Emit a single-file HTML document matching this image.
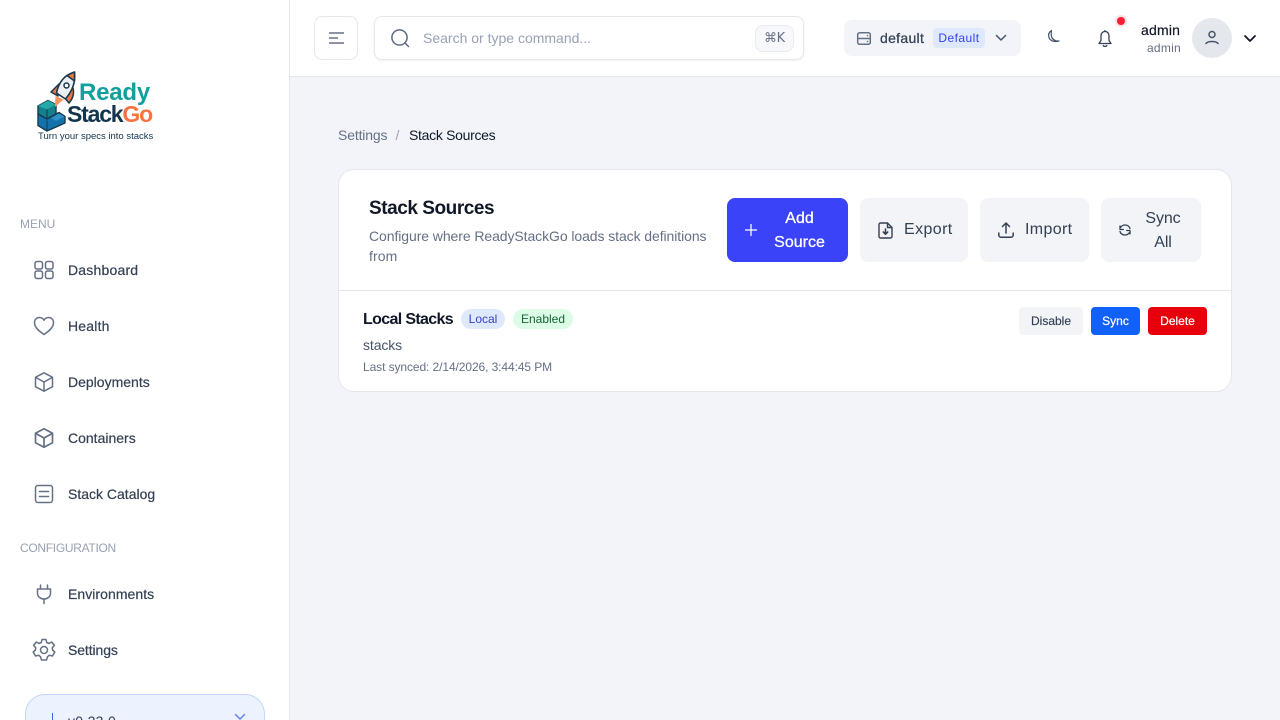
<!DOCTYPE html>
<html lang="en"><head><meta charset="utf-8"><title>Stack Sources</title>
<style>
*{box-sizing:border-box}
html,body{margin:0;padding:0;width:1280px;height:720px;overflow:hidden}
body{background:#f2f4f9;font-family:"Liberation Sans",sans-serif;position:relative;color:#344054}
#root{position:absolute;left:0;top:0;width:1280px;height:720px;overflow:hidden}
.a{position:absolute;white-space:nowrap}
.t{position:absolute;white-space:nowrap;line-height:20px;height:20px}
svg{position:absolute;fill:none;stroke:currentColor;stroke-width:1.5;stroke-linecap:round;stroke-linejoin:round;overflow:visible}
.nav{font-size:14px;font-weight:400;color:#344054;letter-spacing:0;-webkit-text-stroke:.2px #344054}
.ic{color:#667085}
.sec{font-size:12px;color:#98a2b3;letter-spacing:0}
.btn{position:absolute;border-radius:8px;background:#f2f4f7}
</style></head><body><div id="root">

<!-- sidebar -->
<div class="a" style="left:0;top:0;width:290px;height:720px;background:#fff;border-right:1px solid #e4e7ec"></div>

<!-- logo -->
<svg style="left:36px;top:70px;color:#17384f" width="50" height="64" viewBox="0 0 50 64" stroke-width="1.200">
 <path d="M23 14L15 22L22 26Z" fill="#f4743b"/>
 <path d="M37 18C38.500 24 36.500 29 33 33L28 27Z" fill="#f4743b"/>
 <path d="M38.500 2C29 5 23 11 20.500 23L29.500 29C37 20 39.500 12 38.500 2Z" fill="#eceff2" stroke-width="1.600"/>
 <path d="M38.500 2L31 5.500L38.500 11Z" fill="#f4743b"/>
 <circle cx="30.500" cy="15.500" r="2.500" fill="#fff"/>
 <path d="M2 36L12 30.500L20 34.500V44L11 49L2 44Z" fill="#15808c" stroke-width="1.400"/>
 <path d="M2 36L12 30.500L20 34.500L11 39.500Z" fill="#22a9a8" stroke="none"/>
 <path d="M11 39.500V49" stroke-width="1"/>
 <path d="M19.500 26L27.500 29.500L19 37Z" fill="#f8945f" stroke="none"/>
 <path d="M2 44L11 49L20 44L23 42.500L29 46.500V53L11 61L2 55.500Z" fill="#1372ab" stroke-width="1.400"/>
 <path d="M15 48L23 43.500L28.500 46.500L20 51Z" fill="#2f90c6" stroke="none"/>
 <path d="M11 51V61" stroke-width="1"/>
</svg>
<div class="a" style="left:79px;top:79px;font-size:24px;line-height:28px;font-weight:700;color:#12a09c;letter-spacing:-.2px">Ready</div>
<div class="a" style="left:67px;top:100px;font-size:23px;line-height:28px;font-weight:700;color:#12344d;letter-spacing:-1.200px">Stack<span style="color:#f97342">Go</span></div>
<div class="a" style="left:38px;top:129.500px;font-size:9.500px;line-height:13px;color:#12344d;letter-spacing:0">Turn your specs into stacks</div>

<div class="t sec" style="left:20px;top:214px">MENU</div>
<svg class="ic" style="left:34px;top:260px" width="20" height="20" viewBox="0 0 20 20"><rect x="1" y="1.500" width="7.500" height="7.500" rx="2"/><rect x="11.500" y="1.500" width="7.500" height="7.500" rx="2"/><rect x="1" y="11" width="7.500" height="7.500" rx="2"/><rect x="11.500" y="11" width="7.500" height="7.500" rx="2"/></svg>
<div class="t nav" style="left:68px;top:260px;letter-spacing:.2px">Dashboard</div>
<svg class="ic" style="left:34px;top:316px" width="20" height="20" viewBox="0 0 20 20"><path d="M10 18.500C5 15 0.500 11.500 0.500 6.500C0.500 3.500 2.800 1.500 5.300 1.500C7.300 1.500 9 2.500 10 4.200C11 2.500 12.700 1.500 14.700 1.500C17.200 1.500 19.500 3.500 19.500 6.500C19.500 11.500 15 15 10 18.500Z"/></svg>
<div class="t nav" style="left:68px;top:316px;letter-spacing:.2px">Health</div>
<svg class="ic" style="left:34px;top:372px" width="20" height="20" viewBox="0 0 20 20"><path d="M10 .800L18.500 5.300V14.700L10 19.200L1.500 14.700V5.300Z"/><path d="M1.800 5.500L10 10L18.200 5.500M10 10V19"/></svg>
<div class="t nav" style="left:68px;top:372px">Deployments</div>
<svg class="ic" style="left:34px;top:428px;stroke-width:1.700" width="20" height="20" viewBox="0 0 20 20"><path d="M10 .800L18.500 5.300V14.700L10 19.200L1.500 14.700V5.300Z"/><path d="M1.800 5.500L10 10L18.200 5.500M10 10V19"/></svg>
<div class="t nav" style="left:68px;top:428px">Containers</div>
<svg class="ic" style="left:34px;top:484px" width="20" height="20" viewBox="0 0 20 20"><rect x="1.500" y="1.500" width="17" height="17" rx="2.500"/><path d="M5.500 7.500H14.500M5.500 12.500H14.500"/></svg>
<div class="t nav" style="left:68px;top:484px">Stack Catalog</div>

<div class="t sec" style="left:20px;top:538px;letter-spacing:-.3px">CONFIGURATION</div>
<svg class="ic" style="left:34px;top:584px" width="20" height="20" viewBox="0 0 20 20"><path d="M6.500 1V5M13.500 1V5M3.500 5H16.500V9.500C16.500 12.500 13.500 15 10 15C6.500 15 3.500 12.500 3.500 9.500ZM10 15V19.500"/></svg>
<div class="t nav" style="left:68px;top:584px;letter-spacing:.05px">Environments</div>
<svg class="ic" style="left:32px;top:638px" width="24" height="24" viewBox="0 0 24 24" stroke-width="1.300"><circle cx="12" cy="12" r="3.500"/><path d="M10 1.500H14L14.700 4.500L17 5.500L19.700 4L22.300 7.500L20.300 9.800L20.500 12L22.800 14L20.500 18L17.500 17.300L15.500 18.700L14.500 22H9.500L8.500 18.700L6.500 17.300L3.500 18L1.200 14L3.500 12L3.700 9.800L1.700 7.500L4.300 4L7 5.500L9.300 4.500Z"/></svg>
<div class="t nav" style="left:68px;top:640px;letter-spacing:-.1px">Settings</div>

<div class="a" style="left:25px;top:694px;width:240px;height:60px;background:#ecf2fe;border:1px solid #c2d6ff;border-radius:20px"></div>
<div class="a" style="left:51.500px;top:713px;width:1.500px;height:10px;background:#465fff"></div>
<div class="t" style="left:68px;top:711px;font-size:14px;color:#344054;letter-spacing:.3px">v0.23.0</div>
<svg style="left:235px;top:714px;color:#6582f5" width="10" height="6" viewBox="0 0 10 6"><path d="M.500 .500L5 5L9.500 .500"/></svg>

<!-- header -->
<div class="a" style="left:290px;top:0;width:990px;height:77px;background:#fff;border-bottom:1px solid #e4e7ec"></div>
<div class="a" style="left:314px;top:16px;width:44px;height:44px;border:1px solid #e4e7ec;border-radius:8px;background:#fff"></div>
<svg style="left:329px;top:32px;color:#667085;stroke-width:1.600;stroke-linecap:butt" width="15" height="12" viewBox="0 0 15 12"><path d="M0 1H15M0 6H9M0 11H15"/></svg>
<div class="a" style="left:374px;top:16px;width:430px;height:44px;border:1px solid #e4e7ec;border-radius:8px;background:#fff;box-shadow:0 1px 2px rgba(16,24,40,.06)"></div>
<svg style="left:391px;top:29px;color:#5c6a82" width="19" height="19" viewBox="0 0 19 19"><circle cx="8.500" cy="8.500" r="7.600"/><path d="M14.500 14.500L17.500 17.500"/></svg>
<div class="t" style="left:423px;top:28px;font-size:14px;color:#98a2b3;letter-spacing:0">Search or type command...</div>
<div class="a" style="left:755px;top:24.500px;width:39px;height:27px;background:#f6f8fb;border:1px solid #e8ebf1;border-radius:8px"></div>
<div class="t" style="left:764px;top:29px;font-size:13px;color:#667085;font-family:'DejaVu Sans',sans-serif;letter-spacing:-.4px">⌘K</div>

<div class="a" style="left:844px;top:20px;width:177px;height:36px;background:#f2f4f9;border-radius:8px"></div>
<svg class="ic" style="left:857px;top:32px" width="14" height="13" viewBox="0 0 14 13" stroke-width="1.300"><rect x=".700" y=".700" width="12.600" height="11.600" rx="2"/><path d="M.700 6.500H13.300M10.500 3.600H10.600M10.500 9.400H10.600"/></svg>
<div class="t" style="left:880px;top:28px;font-size:14px;color:#344054;letter-spacing:.3px;-webkit-text-stroke:.25px #344054">default</div>
<div class="a" style="left:933px;top:28px;width:52px;height:20px;background:#dfe9fe;border-radius:4px;text-align:center;font-size:12px;line-height:20px;color:#3641f5;letter-spacing:.45px">Default</div>
<svg style="left:996px;top:35px;color:#475467" width="10" height="6" viewBox="0 0 10 6"><path d="M.500 .500L5 5L9.500 .500"/></svg>

<svg style="left:1047px;top:30px;color:#475467;stroke-width:1.200" width="13" height="13" viewBox="0 0 13 13"><path d="M4.500 .500C2 2 1 4.500 2 7.500C3 10.500 7 12.500 12 11C8.500 11.500 5.500 9.500 4.500 6.500C4 4.500 4 2.500 4.500 .500Z"/></svg>
<svg style="left:1098px;top:30px;color:#344054;stroke-width:1.300" width="14" height="18" viewBox="0 0 14 18"><path d="M7 1.500C4.500 1.500 3 3.500 3 6V10.500L1 13.500H13L11 10.500V6C11 3.500 9.500 1.500 7 1.500ZM7 .500V1.500M5.200 15.500C5.700 16.700 8.300 16.700 8.800 15.500"/></svg>
<div class="a" style="left:1115px;top:15px;width:12px;height:12px;border-radius:50%;background:#ffdfe3"></div>
<div class="a" style="left:1117px;top:17px;width:8px;height:8px;border-radius:50%;background:#f81f32"></div>
<div class="t" style="left:1141px;top:20px;font-size:14px;color:#101828;letter-spacing:.2px;-webkit-text-stroke:.2px #101828">admin</div>
<div class="t" style="left:1147px;top:38px;font-size:12px;color:#667085;letter-spacing:.25px">admin</div>
<div class="a" style="left:1192px;top:18px;width:40px;height:40px;border-radius:50%;background:#e4e7ec"></div>
<svg style="left:1205px;top:30px;color:#475467" width="14" height="15" viewBox="0 0 14 15"><circle cx="7" cy="4.500" r="3"/><path d="M1 13.500C3 10.800 11 10.800 13 13.500"/></svg>
<svg style="left:1244px;top:35px;color:#101828;stroke-width:1.800" width="12" height="7" viewBox="0 0 12 7"><path d="M1 1L6 6L11 1"/></svg>

<!-- breadcrumb -->
<div class="t" style="left:338px;top:125px;font-size:14px;color:#667085;letter-spacing:-.15px">Settings</div>
<div class="t" style="left:395.500px;top:125px;font-size:14px;color:#98a2b3">/</div>
<div class="t" style="left:409px;top:125px;font-size:14px;color:#101828;letter-spacing:-.3px">Stack Sources</div>

<!-- card -->
<div class="a" style="left:338px;top:169px;width:894px;height:223px;background:#fff;border:1px solid #e4e7ec;border-radius:16px"></div>
<div class="a" style="left:339px;top:290px;width:892px;height:1px;background:#e4e7ec"></div>
<div class="a" style="left:369px;top:197px;font-size:19px;line-height:24px;font-weight:700;color:#101828;letter-spacing:-.45px">Stack Sources</div>
<div class="t" style="left:369px;top:226px;font-size:14px;color:#667085;letter-spacing:-.08px">Configure where ReadyStackGo loads stack definitions</div>
<div class="t" style="left:369px;top:246px;font-size:14px;color:#667085;letter-spacing:.1px">from</div>

<div class="a" style="left:727px;top:198px;width:121px;height:64px;background:#3a43f8;border-radius:8px"></div>
<svg style="left:745px;top:224px;color:#fff;stroke-width:1.300" width="12" height="12" viewBox="0 0 12 12"><path d="M6 .500V11.500M.500 6H11.500"/></svg>
<div class="a" style="left:770px;top:206.500px;width:59px;text-align:center;font-size:16px;line-height:24px;color:#fff;font-weight:400;-webkit-text-stroke:.3px #fff">Add<br>Source</div>

<div class="btn" style="left:860px;top:198px;width:108px;height:64px"></div>
<svg style="left:878px;top:222px;color:#344054;stroke-width:1.400" width="15" height="17" viewBox="0 0 15 17"><path d="M2.500 1H9.500L14 5.500V14.500C14 15.500 13.200 16 12.500 16H2.500C1.500 16 1 15.300 1 14.500V2.500C1 1.500 1.800 1 2.500 1ZM9.500 1V5.500H14"/><path d="M7.500 7V12M5.300 10L7.500 12.200L9.700 10" stroke-width="1.600"/></svg>
<div class="t" style="left:904px;top:220px;font-size:16px;color:#344054;letter-spacing:.4px">Export</div>

<div class="btn" style="left:980px;top:198px;width:109px;height:64px"></div>
<svg style="left:998px;top:222px;color:#344054;stroke-width:1.500" width="16" height="16" viewBox="0 0 16 16"><path d="M8 1V11M4.500 4.500L8 1L11.500 4.500M.800 11V13C.800 14.300 1.800 15.200 3 15.200H13C14.200 15.200 15.200 14.300 15.200 13V11"/></svg>
<div class="t" style="left:1025px;top:220px;font-size:16px;color:#344054;letter-spacing:.35px">Import</div>

<div class="btn" style="left:1101px;top:198px;width:100px;height:64px"></div>
<svg style="left:1119px;top:224px;color:#344054;stroke-width:1.300" width="12" height="12" viewBox="0 0 12 12"><path d="M11 4.500C10.300 2.300 8.400 1 6 1C4 1 2.500 2 1.500 3.500M1 5.500V2M1 5.500H4.300M1 7.500C1.700 9.700 3.600 11 6 11C8 11 9.500 10 10.500 8.500M11 6.500V10M11 6.500H7.700"/></svg>
<div class="a" style="left:1143px;top:206.500px;width:40px;text-align:center;font-size:16px;line-height:24px;color:#344054;letter-spacing:-.1px">Sync<br>All</div>

<!-- row -->
<div class="t" style="left:363px;top:310px;font-size:16px;font-weight:700;color:#101828;letter-spacing:-.65px">Local Stacks</div>
<div class="a" style="left:461px;top:309px;width:44px;height:20px;background:#dfe9fe;border-radius:10px;text-align:center;font-size:12px;line-height:20px;color:#3641c8">Local</div>
<div class="a" style="left:513px;top:309px;width:60px;height:20px;background:#dcfce7;border-radius:10px;text-align:center;font-size:12px;line-height:20px;color:#166534">Enabled</div>
<div class="t" style="left:363px;top:335px;font-size:14px;color:#475467;letter-spacing:-.1px">stacks</div>
<div class="t" style="left:363px;top:357px;font-size:12px;color:#667085;letter-spacing:-.09px">Last synced: 2/14/2026, 3:44:45 PM</div>

<div class="a" style="left:1019px;top:307px;width:64px;height:28px;background:#f2f4f7;border-radius:4px;text-align:center;font-size:12px;line-height:28px;color:#344054;-webkit-text-stroke:.15px #344054">Disable</div>
<div class="a" style="left:1091px;top:307px;width:49px;height:28px;background:#1160fa;border-radius:4px;text-align:center;font-size:12px;line-height:28px;color:#fff;-webkit-text-stroke:.2px #fff">Sync</div>
<div class="a" style="left:1148px;top:307px;width:59px;height:28px;background:#e7000b;border-radius:4px;text-align:center;font-size:12px;line-height:28px;color:#fff;-webkit-text-stroke:.2px #fff">Delete</div>
</div></body></html>
